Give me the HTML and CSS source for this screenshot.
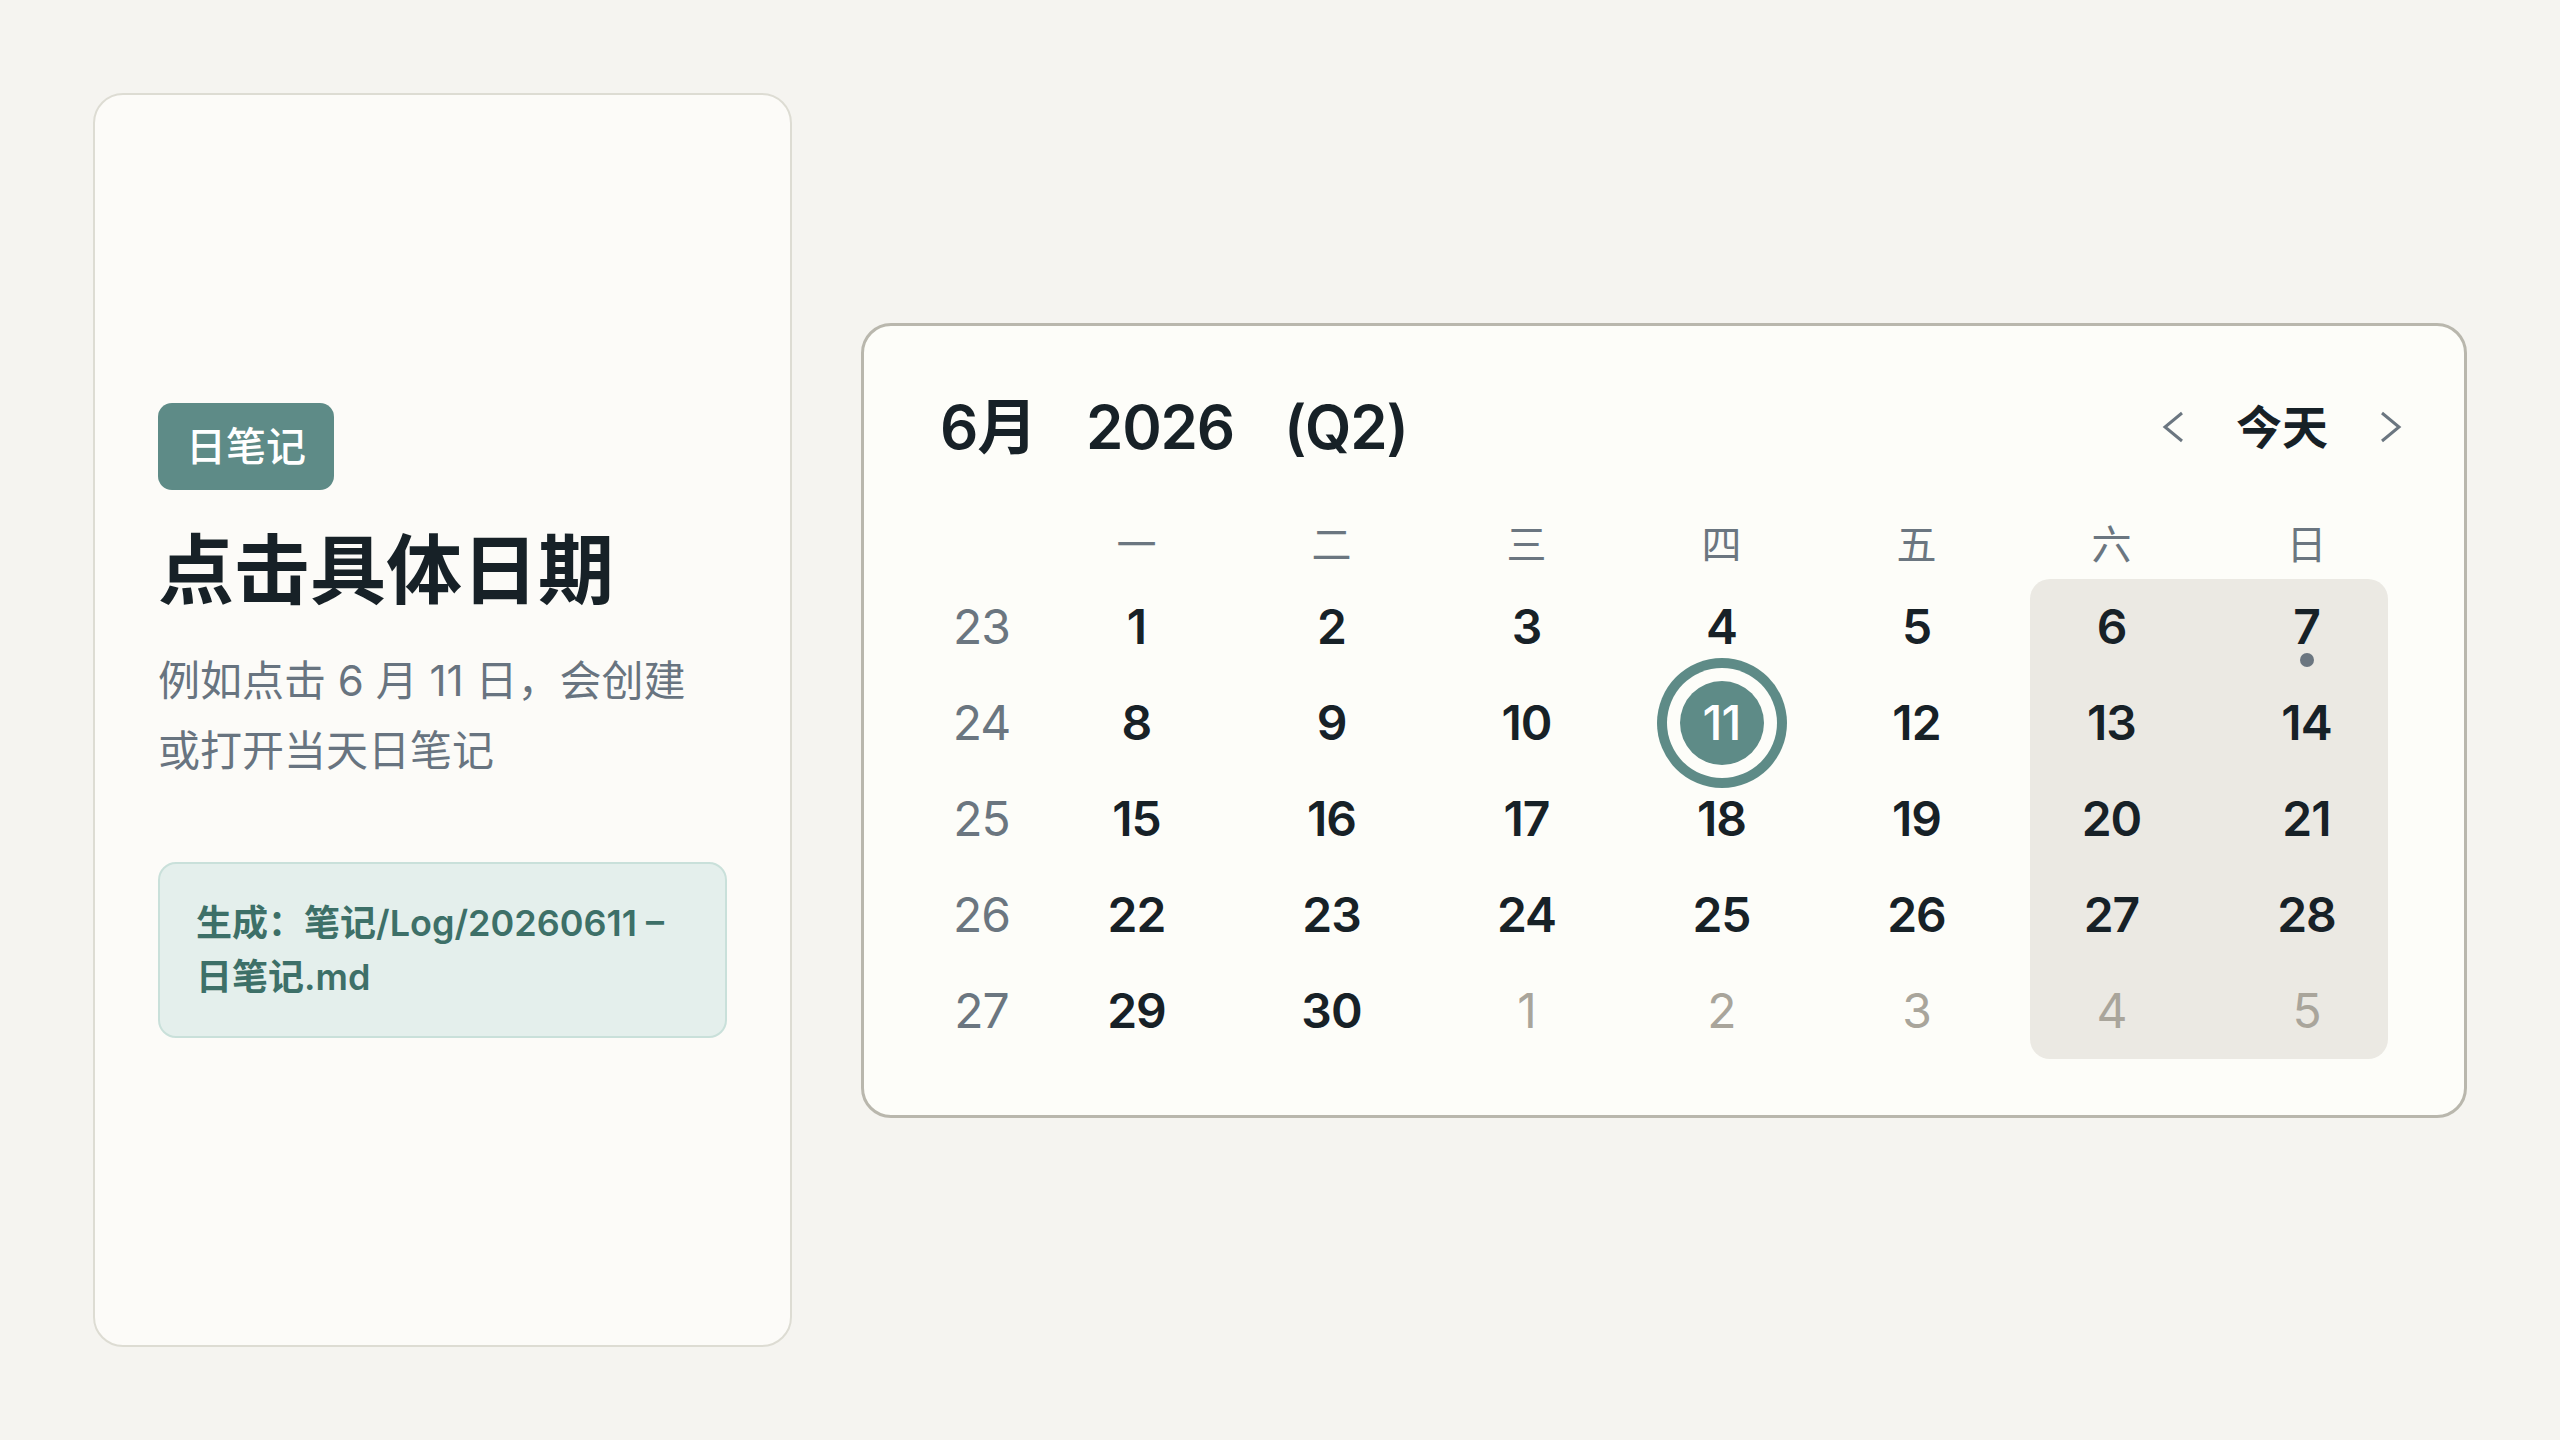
FILE: index.html
```html
<!DOCTYPE html>
<html lang="zh-CN">
<head>
    <meta charset="UTF-8">
    <meta name="viewport" content="width=device-width, initial-scale=1.0">
    <title>日笔记 - 点击具体日期</title>
    <link rel="stylesheet" href="styles.css">
</head>
<body>
    <main class="stage">
        <section class="intro-card">
            <span class="tag">日笔记</span>
            <h1>点击具体日期</h1>
            <p class="desc">例如点击 6 月 11 日，会创建<br>或打开当天日笔记</p>
            <div class="result">生成：笔记/Log/20260611 –<br>日笔记.md</div>
        </section>

        <section class="calendar">
            <header class="cal-head">
                <div class="cal-title">
                    <span class="month">6月</span><span class="year">2026</span><span class="quarter">(Q2)</span>
                </div>
                <nav class="nav">
                    <svg class="chevron" width="22" height="32" viewBox="0 0 22 32"><polyline points="20,2 3,16 20,30"/></svg>
                    <span class="today-btn">今天</span>
                    <svg class="chevron" width="22" height="32" viewBox="0 0 22 32"><polyline points="2,2 19,16 2,30"/></svg>
                </nav>
            </header>

            <div class="weekdays">
                <span></span><span>一</span><span>二</span><span>三</span><span>四</span><span>五</span><span>六</span><span>日</span>
            </div>

            <div class="weeks">
                <div class="week">
                    <span class="cell wk">23</span>
                    <span class="cell">1</span><span class="cell">2</span><span class="cell">3</span><span class="cell">4</span><span class="cell">5</span>
                    <span class="cell sat">6</span><span class="cell sun has-note">7</span>
                </div>
                <div class="week">
                    <span class="cell wk">24</span>
                    <span class="cell">8</span><span class="cell">9</span><span class="cell">10</span>
                    <span class="cell today"><span class="disc">11</span></span>
                    <span class="cell">12</span>
                    <span class="cell sat">13</span><span class="cell sun">14</span>
                </div>
                <div class="week">
                    <span class="cell wk">25</span>
                    <span class="cell">15</span><span class="cell">16</span><span class="cell">17</span><span class="cell">18</span><span class="cell">19</span>
                    <span class="cell sat">20</span><span class="cell sun">21</span>
                </div>
                <div class="week">
                    <span class="cell wk">26</span>
                    <span class="cell">22</span><span class="cell">23</span><span class="cell">24</span><span class="cell">25</span><span class="cell">26</span>
                    <span class="cell sat">27</span><span class="cell sun">28</span>
                </div>
                <div class="week">
                    <span class="cell wk">27</span>
                    <span class="cell">29</span><span class="cell">30</span>
                    <span class="cell muted">1</span><span class="cell muted">2</span><span class="cell muted">3</span>
                    <span class="cell sat muted">4</span><span class="cell sun muted">5</span>
                </div>
            </div>
        </section>
    </main>
</body>
</html>
```

FILE: styles.css
```css
body {
    margin: 0;
    background-color: #f5f4f0;
    font-family: Inter, "Noto Sans CJK SC", sans-serif;
    color: #172127;
}
.stage {
    display: flex;
    align-items: center;
    gap: 69px;
    height: 1440px;
    padding: 93px;
    box-sizing: border-box;
}

/* left card */
.intro-card {
    width: 699px;
    height: 1254px;
    flex-shrink: 0;
    box-sizing: border-box;
    border: 2px solid #dddcd3;
    border-radius: 30px;
    background-color: #fcfbf8;
    padding: 0 63px;
    display: flex;
    flex-direction: column;
    justify-content: center;
    align-items: flex-start;
}
.tag {
    background-color: #5e8b87;
    color: #fff;
    font-size: 40px;
    font-weight: 500;
    line-height: 51px;
    padding: 18px 28px;
    border-radius: 14px;
}
.intro-card h1 {
    margin: 30px 0 0;
    font-size: 76px;
    line-height: 100px;
    font-weight: 700;
    color: #172127;
}
.desc {
    margin: 26px 0 0;
    font-size: 42px;
    line-height: 70px;
    color: #687480;
}
.result {
    margin-top: 76px;
    width: 100%;
    box-sizing: border-box;
    border: 2px solid #c9e0da;
    background-color: #e4efec;
    border-radius: 18px;
    padding: 32px 36px;
    font-size: 36px;
    line-height: 54px;
    font-weight: 600;
    color: #3d7068;
}

/* calendar */
.calendar {
    flex: 1;
    isolation: isolate;
    border: 3px solid #b9b7ad;
    border-radius: 30px;
    background-color: #fdfdf9;
    padding: 61px 60px 56px;
}
.cal-head {
    display: flex;
    justify-content: space-between;
    align-items: center;
    height: 80px;
    padding: 0 2px 0 16px;
    margin-bottom: 54px;
}
.cal-title {
    font-size: 60px;
    font-weight: 600;
    line-height: 80px;
    letter-spacing: -0.02em;
    white-space: nowrap;
}
.year {
    margin-left: 50px;
}
.quarter {
    margin-left: 50px;
}
.nav {
    display: flex;
    align-items: center;
    gap: 52px;
}
.today-btn {
    font-size: 46px;
    font-weight: 600;
    line-height: 80px;
}
.chevron polyline {
    fill: none;
    stroke: #6b7680;
    stroke-width: 3;
}

.weekdays,
.week {
    display: grid;
    grid-template-columns: 115px repeat(7, 195px);
}
.weekdays {
    height: 48px;
    margin-bottom: 10px;
    font-size: 40px;
    line-height: 48px;
    color: #6b7680;
    text-align: center;
}
.week {
    height: 96px;
}
.cell {
    position: relative;
    display: flex;
    align-items: center;
    justify-content: center;
    font-size: 48px;
    font-weight: 600;
    letter-spacing: -0.02em;
}
.wk {
    font-weight: 400;
    color: #6b7680;
}
.muted {
    font-weight: 400;
    color: #a9a59b;
}
.sat::before,
.sun::before {
    content: "";
    position: absolute;
    top: 0;
    bottom: 0;
    z-index: -1;
    background-color: #ebe9e3;
}
.sat::before {
    left: 16px;
    right: 0;
}
.sun::before {
    left: 0;
    right: 16px;
}
.week:first-child .sat::before { border-top-left-radius: 20px; }
.week:first-child .sun::before { border-top-right-radius: 20px; }
.week:last-child .sat::before { border-bottom-left-radius: 20px; }
.week:last-child .sun::before { border-bottom-right-radius: 20px; }

.has-note::after {
    content: "";
    position: absolute;
    left: 50%;
    top: calc(50% + 26px);
    width: 14px;
    height: 14px;
    margin-left: -7px;
    border-radius: 50%;
    background-color: #6b7680;
}
.disc {
    width: 84px;
    height: 84px;
    border-radius: 50%;
    background-color: #5e8b87;
    color: #fff;
    font-weight: 500;
    display: flex;
    align-items: center;
    justify-content: center;
    box-shadow: 0 0 0 13px #fdfdf9, 0 0 0 23px #5e8b87;
}
```
